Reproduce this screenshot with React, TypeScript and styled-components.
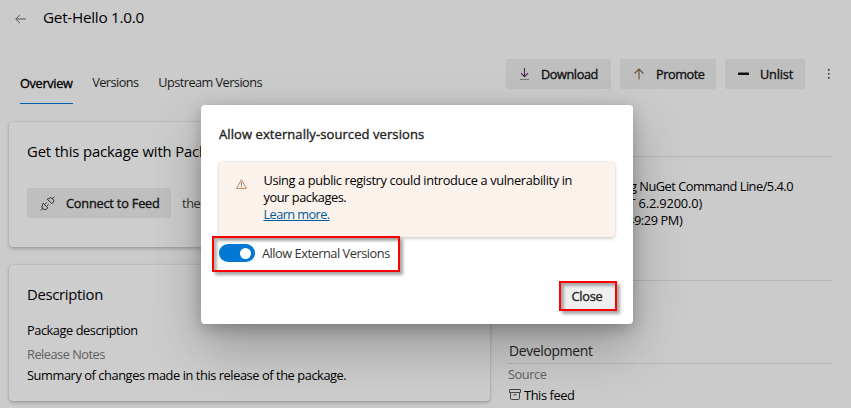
import React from 'react';
import styled, { createGlobalStyle } from 'styled-components';

const Global = createGlobalStyle`
  * { box-sizing: border-box; }
  body {
    margin: 0;
    background: #ccc;
    overflow: hidden;
    font-family: "Open Sans", "Noto Sans", sans-serif;
    font-size: 12.8px;
    color: #000;
  }
`;

const Page = styled.div`
  position: relative;
  width: 851px;
  height: 408px;
  overflow: hidden;
  background: #cbcbcb;
  white-space: nowrap;
`;

const Header = styled.header`
  display: flex;
  align-items: center;
  height: 36px;
  padding: 2px 0 0 15px;
  gap: 17px;
`;

const PageTitle = styled.h1`
  margin: 0;
  font-size: 15.3px;
  font-weight: 400;
  line-height: 32px;
  height: 36px;
  letter-spacing: -0.28px;
`;

const Toolbar = styled.div`
  display: flex;
  justify-content: space-between;
  height: 86px;
  padding: 23px 17px 0 20px;
`;

const Tabs = styled.nav`
  display: flex;
  gap: 19.6px;
  padding-top: 13px;
`;

const Tab = styled.a<{ $active?: boolean; $spacing?: number }>`
  height: 32px;
  line-height: ${(p) => (p.$active ? 23 : 21)}px;
  font-size: 12.7px;
  font-weight: 400;
  -webkit-text-stroke: ${(p) => (p.$active ? 0.35 : 0)}px;
  letter-spacing: ${(p) => p.$spacing ?? -0.52}px;
  color: ${(p) => (p.$active ? '#000' : '#1a1a1a')};
  border-bottom: ${(p) => (p.$active ? '1px solid #0060ae' : 'none')};
`;

const Actions = styled.div`
  display: flex;
  gap: 9px;
`;

const Button = styled.button<{ $width: number; $spacing?: number }>`
  display: flex;
  align-items: center;
  gap: 11px;
  width: ${(p) => p.$width}px;
  height: 30px;
  padding: 0 0 0 13px;
  border: 0;
  border-radius: 2px;
  background: #bfbfbf;
  color: #111;
  font-family: inherit;
  font-size: 12.7px;
  font-weight: 400;
  -webkit-text-stroke: 0.35px;
  line-height: 30px;
  letter-spacing: ${(p) => p.$spacing ?? -0.4}px;
  svg { flex: none; }
`;

const MoreButton = styled.button`
  display: flex;
  align-items: center;
  justify-content: center;
  width: 9px;
  height: 30px;
  margin-left: 11px;
  padding: 0 1px 0 0;
  border: 0;
  background: none;
`;

const Columns = styled.main`
  display: grid;
  grid-template-columns: 481px 324px;
  column-gap: 18px;
  padding-left: 9px;
`;

const Cards = styled.div`
  display: grid;
  grid-template-rows: 125px 136px;
  row-gap: 18px;
`;

const Card = styled.section`
  padding: 18px 18px 0;
  border-radius: 4px;
  background: #cdcdcd;
  box-shadow: 0 1.2px 3.6px rgba(0, 0, 0, 0.2), 0 0 1.5px rgba(0, 0, 0, 0.16);
`;

const CardTitle = styled.h2<{ $spacing: number }>`
  margin: 0;
  font-size: 14.8px;
  font-weight: 400;
  line-height: 22px;
  letter-spacing: ${(p) => p.$spacing}px;
`;

const ConnectRow = styled.div`
  display: flex;
  align-items: center;
  gap: 11px;
  margin-top: 26px;
  color: #333;
  letter-spacing: -0.4px;
`;

const Line = styled.p<{ $muted?: boolean; $top?: number; $spacing?: number; $shift?: number }>`
  margin: ${(p) => p.$top ?? 0}px 0 0 ${(p) => p.$shift ?? 0}px;
  line-height: 17px;
  letter-spacing: ${(p) => p.$spacing ?? -0.45}px;
  color: ${(p) => (p.$muted ? '#606060' : '#000')};
`;

const Details = styled.aside`
  display: flex;
  flex-direction: column;
`;

const DetailBlock = styled.section<{ $height: number }>`
  height: ${(p) => p.$height}px;
  border-bottom: 1px solid #b5b5b5;
`;

const PushedBy = styled.div`
  padding: 21px 0 0 122px;
`;

const DetailTitle = styled.h3`
  margin: 60px 0 0;
  padding-left: 1px;
  font-size: 13.9px;
  font-weight: 400;
  line-height: 20px;
  letter-spacing: -0.32px;
  color: #222;
`;

const FeedRow = styled.div`
  display: flex;
  align-items: center;
  gap: 3px;
  margin-top: 3px;
  padding-left: 1px;
  line-height: 19px;
  letter-spacing: -0.4px;
  svg { margin-bottom: 2px; }
`;

const Dialog = styled.div`
  position: absolute;
  left: 201px;
  top: 105px;
  width: 432px;
  height: 219px;
  padding: 18px 18px 0;
  border-radius: 4px;
  background: #fff;
  box-shadow: 0 23px 52px rgba(0, 0, 0, 0.26), 0 4.8px 14.4px rgba(0, 0, 0, 0.22);
`;

const DialogTitle = styled.h2`
  margin: 0;
  font-size: 13px;
  font-weight: 400;
  -webkit-text-stroke: 0.35px;
  line-height: 22px;
  letter-spacing: 0.08px;
  color: #222;
`;

const Warning = styled.div`
  display: flex;
  gap: 16.5px;
  height: 75px;
  margin-top: 17px;
  padding: 10px 0 0 17px;
  border-radius: 4px;
  background: #fbf2ec;
  box-shadow: 0 1.6px 3.6px rgba(0, 0, 0, 0.15), 0 0 3px rgba(0, 0, 0, 0.1);
  svg { flex: none; margin-top: 7px; }
`;

const LearnMore = styled.a`
  color: #005a9e;
  letter-spacing: -0.6px;
  text-decoration: underline;
`;

const Callout = styled.div<{ $width: number; $height: number }>`
  display: flex;
  align-items: center;
  width: ${(p) => p.$width}px;
  height: ${(p) => p.$height}px;
  border: 2px solid #fe0000;
  box-shadow: 3px 3px 3px rgba(0, 0, 0, 0.35), inset 3px 3px 3px rgba(0, 0, 0, 0.3);
`;

const ToggleCallout = styled(Callout)`
  position: relative;
  margin: -1px 0 0 -7px;
  padding: 0 0 2px 5px;
  gap: 7px;
  color: #333;
  line-height: 18px;
  letter-spacing: -0.48px;
`;

const CloseCallout = styled(Callout)`
  margin: 9px 0 0 340px;
  background: #efefef;
`;

const CloseButton = styled.button`
  width: 100%;
  height: 100%;
  padding: 0 2px 0 0;
  border: 0;
  background: none;
  color: #222;
  font-family: inherit;
  font-size: 12.8px;
  font-weight: 400;
  -webkit-text-stroke: 0.35px;
  letter-spacing: -0.3px;
  line-height: 26px;
`;

const Toggle = styled.span`
  display: flex;
  align-items: center;
  justify-content: flex-end;
  width: 36px;
  height: 18px;
  padding-right: 4px;
  border-radius: 9px;
  background: #0078d4;
`;

const Knob = styled.span`
  width: 11px;
  height: 11px;
  border-radius: 50%;
  background: #fff;
`;

const BackIcon = () => (
  <svg width="11" height="10" viewBox="0 0 11 10" fill="none" stroke="#555" strokeWidth="1">
    <path d="M11 5H.8M5 .8.8 5 5 9.2" />
  </svg>
);

const DownloadIcon = () => (
  <svg width="11" height="12" viewBox="0 0 11 12" fill="none">
    <path d="M5.5 0v8.5M2 5.2l3.5 3.5L9 5.2" stroke="#482052" strokeWidth="1.1" />
    <path d="M1 11.5h9" stroke="#777" />
  </svg>
);

const PromoteIcon = () => (
  <svg width="12" height="12" viewBox="0 0 12 12" fill="none" stroke="#65502f" strokeWidth="1.1">
    <path d="M6 11.5V1.2M1.5 5.5 6 1l4.5 4.5" />
  </svg>
);

const UnlistIcon = () => (
  <svg width="11" height="12" viewBox="0 0 11 12">
    <rect y="4.6" width="11" height="2.3" rx=".5" fill="#111" />
  </svg>
);

const MoreIcon = () => (
  <svg width="4" height="10" viewBox="0 0 4 10" fill="#333">
    <rect x="1" y="0" width="1.6" height="1.6" />
    <rect x="1" y="4" width="1.6" height="1.6" />
    <rect x="1" y="8" width="1.6" height="1.6" />
  </svg>
);

const PlugIcon = () => (
  <svg width="15" height="15" viewBox="0 0 15 15" fill="none" stroke="#333" strokeWidth="1">
    <path d="M.6 14.4l2.5-2.5M3.2 7.2l4.7 4.7-1.2 1.1a2.8 2.8 0 0 1-3.7-.2 2.8 2.8 0 0 1-.5-3.9zM4.6 8.5l2-2M6.6 10.5l2-2" />
    <path d="M14.4.6l-2.3 2.3M7.2 3.1l4.7 4.7 1-1.1a2.8 2.8 0 0 0-.1-3.8 2.8 2.8 0 0 0-4-.3z" />
  </svg>
);

const WarningIcon = () => (
  <svg width="11" height="10" viewBox="0 0 11 10" fill="none">
    <path d="M5.5.7 10.4 9.4H.6z" stroke="#b88960" strokeLinejoin="round" />
    <path d="M5.5 3.2v3.2M5.5 7.2v1.1" stroke="#8d7770" />
  </svg>
);

const FeedIcon = () => (
  <svg width="12" height="11" viewBox="0 0 12 11" fill="none" stroke="#444">
    <path d="M.5.5h11v3H.5zM1.5 3.5v5.7q0 1.3 1.3 1.3h6.4q1.3 0 1.3-1.3V3.5M4.3 5.8h3.4" />
  </svg>
);

export default function App() {
  return (
    <Page>
      <Global />
      <Header>
        <BackIcon />
        <PageTitle>Get-Hello 1.0.0</PageTitle>
      </Header>
      <Toolbar>
        <Tabs>
          <Tab $active $spacing={-0.3}>Overview</Tab>
          <Tab>Versions</Tab>
          <Tab>Upstream Versions</Tab>
        </Tabs>
        <Actions>
          <Button $width={105}><DownloadIcon />Download</Button>
          <Button $width={96} $spacing={-0.42}><PromoteIcon />Promote</Button>
          <Button $width={80} $spacing={-0.15}><UnlistIcon />Unlist</Button>
          <MoreButton aria-label="More"><MoreIcon /></MoreButton>
        </Actions>
      </Toolbar>
      <Columns>
        <Cards>
          <Card>
            <CardTitle $spacing={-0.13}>Get this package with Package</CardTitle>
            <ConnectRow>
              <Button $width={144} $spacing={-0.17}><PlugIcon />Connect to Feed</Button>
              <span>then</span>
            </ConnectRow>
          </Card>
          <Card>
            <CardTitle $spacing={-0.28}>Description</CardTitle>
            <Line $top={17}>Package description</Line>
            <Line $muted $top={7} $spacing={-0.5}>Release Notes</Line>
            <Line $top={4} $spacing={-0.42}>Summary of changes made in this release of the package.</Line>
          </Card>
        </Cards>
        <Details>
          <DetailBlock $height={35} />
          <DetailBlock $height={124}>
            <PushedBy>
              <Line $spacing={-0.5}>g NuGet Command Line/5.4.0</Line>
              <Line $spacing={-0.15} $shift={-1.5}>T 6.2.9200.0)</Line>
              <Line $spacing={-0.4} $shift={-3}>49:29 PM)</Line>
            </PushedBy>
          </DetailBlock>
          <DetailBlock $height={83}>
            <DetailTitle>Development</DetailTitle>
          </DetailBlock>
          <Line $muted $top={2}>Source</Line>
          <FeedRow><FeedIcon />This feed</FeedRow>
        </Details>
      </Columns>
      <Dialog role="dialog">
        <DialogTitle>Allow externally-sourced versions</DialogTitle>
        <Warning>
          <WarningIcon />
          <div>
            <Line $spacing={-0.37}>Using a public registry could introduce a vulnerability in</Line>
            <Line>your packages.</Line>
            <Line><LearnMore>Learn more.</LearnMore></Line>
          </div>
        </Warning>
        <ToggleCallout $width={188} $height={36}>
          <Toggle><Knob /></Toggle>
          <span>Allow External Versions</span>
        </ToggleCallout>
        <CloseCallout $width={58} $height={30}>
          <CloseButton>Close</CloseButton>
        </CloseCallout>
      </Dialog>
    </Page>
  );
}
